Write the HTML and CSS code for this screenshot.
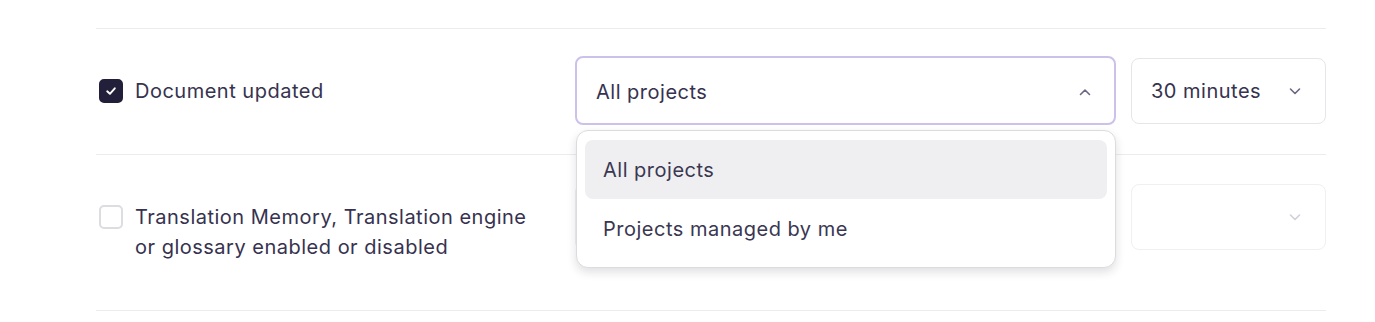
FILE: index.html
```html
<!DOCTYPE html>
<html lang="en">
<head>
<meta charset="utf-8">
<title>Notifications</title>
<link rel="stylesheet" href="styles.css">
</head>
<body>
<div class="list">
  <div class="row">
    <div class="label">
      <span class="checkbox checked">
        <svg width="14" height="14" viewBox="0 0 14 14"><path d="M3.2 7.3 L5.9 9.8 L10.8 4.3" fill="none" stroke="#fff" stroke-width="1.9" stroke-linecap="round" stroke-linejoin="round"/></svg>
      </span>
      <span class="text">Document updated</span>
    </div>
    <div class="controls">
      <div class="select-wrap">
        <div class="select wide focused">
          <span class="value">All projects</span>
          <svg class="chev" width="14" height="14" viewBox="0 0 14 14"><path d="M2.5 9.5 L7 5 L11.5 9.5" fill="none" stroke="#6b6784" stroke-width="1.6" stroke-linecap="round" stroke-linejoin="round"/></svg>
        </div>
        <div class="menu">
          <div class="option active">All projects</div>
          <div class="option">Projects managed by me</div>
        </div>
      </div>
      <div class="select narrow">
        <span class="value">30 minutes</span>
        <svg class="chev" width="14" height="14" viewBox="0 0 14 14"><path d="M2.5 5 L7 9.5 L11.5 5" fill="none" stroke="#6b6784" stroke-width="1.6" stroke-linecap="round" stroke-linejoin="round"/></svg>
      </div>
    </div>
  </div>
  <div class="row">
    <div class="label">
      <span class="checkbox"></span>
      <span class="text">Translation Memory, Translation engine<br>or glossary enabled or disabled</span>
    </div>
    <div class="controls">
      <div class="select wide disabled">
        <span class="value"></span>
      </div>
      <div class="select narrow disabled">
        <span class="value"></span>
        <svg class="chev" width="14" height="14" viewBox="0 0 14 14"><path d="M2.5 5 L7 9.5 L11.5 5" fill="none" stroke="#6b6784" stroke-width="1.6" stroke-linecap="round" stroke-linejoin="round"/></svg>
      </div>
    </div>
  </div>
</div>
</body>
</html>
```

FILE: styles.css
```css
* { box-sizing: border-box; }
html, body { margin: 0; background: #fff; }
body {
  font-family: Inter, "Noto Sans", "Liberation Sans", sans-serif;
  color: #36324f;
  padding: 28px 0 0 96px;
}
.list {
  width: 1230px;
  border-top: 1px solid #ececef;
}
.row {
  display: flex;
  justify-content: space-between;
  align-items: flex-start;
  padding: 29px 0 30px;
  border-bottom: 1px solid #ececef;
}
.label {
  display: flex;
  align-items: flex-start;
  gap: 12px;
  padding: 18px 0 18px 3px;
  font-size: 20px;
  line-height: 30px;
  letter-spacing: 0.5px;
}
.checkbox {
  width: 24px;
  height: 24px;
  margin-top: 3px;
  border: 2px solid #dcdce1;
  border-radius: 5px;
  flex: none;
  display: flex;
  align-items: center;
  justify-content: center;
  background: #fff;
}
.checkbox.checked {
  background: #221f3a;
  border-color: #221f3a;
}
.controls {
  display: flex;
  gap: 15px;
}
.select-wrap { position: relative; }
.select {
  height: 66px;
  border: 1px solid #e6e6ea;
  border-radius: 8px;
  display: flex;
  align-items: center;
  justify-content: space-between;
  padding: 0 23px 0 19px;
  font-size: 20px;
  letter-spacing: 0.5px;
  background: #fff;
}
.select.wide { width: 541px; }
.select.narrow { width: 195px; }
.select.focused {
  border: 2px solid #cdc1ec;
  height: 69px;
  margin: -2px 0 -1px;
  padding: 2px 22px 0 19px;
}
.select.disabled {
  border-color: #f0f0f2;
}
.select.disabled .chev { opacity: 0.3; }
.menu {
  position: absolute;
  left: 1px;
  right: 0;
  top: 72px;
  background: #fff;
  border: 1px solid #dcdce0;
  border-radius: 12px;
  box-shadow: 0 4px 10px rgba(30, 30, 50, 0.14);
  padding: 9px 8px;
  z-index: 5;
}
.option {
  height: 59px;
  display: flex;
  align-items: center;
  padding-left: 18px;
  font-size: 20px;
  letter-spacing: 0.5px;
  color: #3a3752;
  border-radius: 8px;
}
.option.active { background: #efeff1; }
```
